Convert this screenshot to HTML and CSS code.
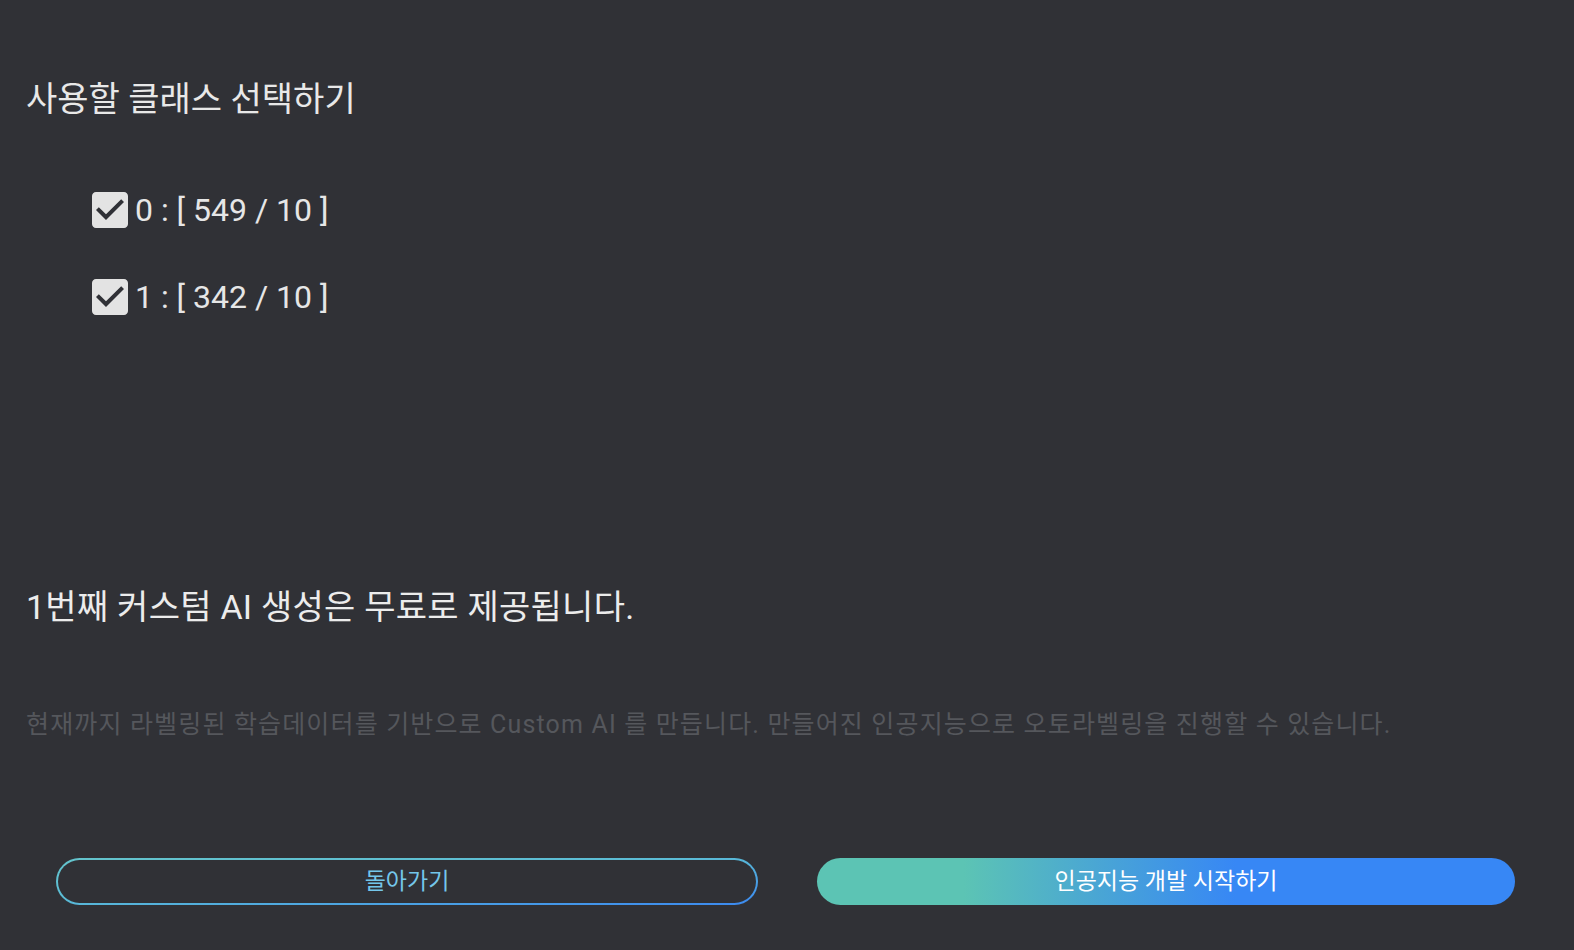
FILE: index.html
```html
<!DOCTYPE html>
<html lang="ko">
<head>
<meta charset="utf-8">
<title>클래스 선택</title>
<link rel="stylesheet" href="styles.css">
</head>
<body>
<main class="page">
  <section class="content">
    <h2 class="title">사용할 클래스 선택하기</h2>
    <ul class="class-list">
      <li class="class-row">
        <svg class="check" viewBox="0 0 24 24" width="48" height="48" aria-hidden="true"><path d="M19 3H5c-1.11 0-2 .9-2 2v14c0 1.1.89 2 2 2h14c1.11 0 2-.9 2-2V5c0-1.1-.89-2-2-2zm-9 14l-5-5 1.41-1.41L10 14.17l7.590-7.59L19 8l-9 9z"/></svg>
        <span class="class-label">0 : [ 549 / 10 ]</span>
      </li>
      <li class="class-row">
        <svg class="check" viewBox="0 0 24 24" width="48" height="48" aria-hidden="true"><path d="M19 3H5c-1.11 0-2 .9-2 2v14c0 1.1.89 2 2 2h14c1.11 0 2-.9 2-2V5c0-1.1-.89-2-2-2zm-9 14l-5-5 1.41-1.41L10 14.17l7.590-7.59L19 8l-9 9z"/></svg>
        <span class="class-label">1 : [ 342 / 10 ]</span>
      </li>
    </ul>
    <p class="notice">1번째 커스텀 AI 생성은 무료로 제공됩니다.</p>
    <p class="desc">현재까지 라벨링된 학습데이터를 기반으로 Custom AI 를 만듭니다. 만들어진 인공지능으로 오토라벨링을 진행할 수 있습니다.</p>
  </section>
  <div class="actions">
    <button class="btn btn-outline" type="button">돌아가기</button>
    <button class="btn btn-primary" type="button">인공지능 개발 시작하기</button>
  </div>
</main>
</body>
</html>
```
FILE: styles.css
```css
* { box-sizing: border-box; }
html, body {
  margin: 0;
  padding: 0;
  background: #303136;
}
body {
  width: 1574px;
  height: 950px;
  overflow: hidden;
  font-family: Roboto, "Noto Sans CJK KR", sans-serif;
  color: #e6e6e6;
}
.page {
  display: flex;
  flex-direction: column;
}
.content {
  padding: 79px 0 0 26px;
  display: flex;
  flex-direction: column;
}
.title {
  margin: 0;
  font-size: 34px;
  line-height: 40px;
  font-weight: 400;
  color: #e8e8e8;
}
.class-list {
  list-style: none;
  margin: 67px 0 0 0;
  padding: 0 0 0 60px;
  display: flex;
  flex-direction: column;
  gap: 39px;
}
.class-row {
  display: flex;
  align-items: center;
  height: 48px;
}
.check {
  display: block;
  fill: #e3e3e3;
  flex: none;
}
.class-label {
  font-size: 32px;
  line-height: 40px;
  color: #e6e6e6;
  padding-left: 1px;
}
.notice {
  margin: 266px 0 0 0;
  font-size: 34px;
  line-height: 40px;
  letter-spacing: 0.25px;
  color: #ececec;
}
.desc {
  margin: 82px 0 0 0;
  font-size: 25px;
  line-height: 32px;
  letter-spacing: 1.15px;
  color: #55575c;
}
.actions {
  display: flex;
  gap: 59px;
  padding: 0 59px 0 56px;
  margin-top: 117px;
}
.btn {
  flex: 1 1 0;
  min-width: 0;
  height: 47px;
  border-radius: 24px;
  font-family: Roboto, "Noto Sans CJK KR", sans-serif;
  font-size: 23px;
  line-height: 1;
  cursor: pointer;
  padding: 0;
}
.btn-outline {
  border: 2px solid transparent;
  background:
    linear-gradient(#303136, #303136) padding-box,
    linear-gradient(to bottom right, #64c4cc 0%, #5bbcd6 45%, #3b89f0 100%) border-box;
  color: #74c6ea;
}
.btn-primary {
  border: none;
  background: linear-gradient(90deg, #5cc4b4 21%, #3787f5 60%);
  color: #ffffff;
}
```
